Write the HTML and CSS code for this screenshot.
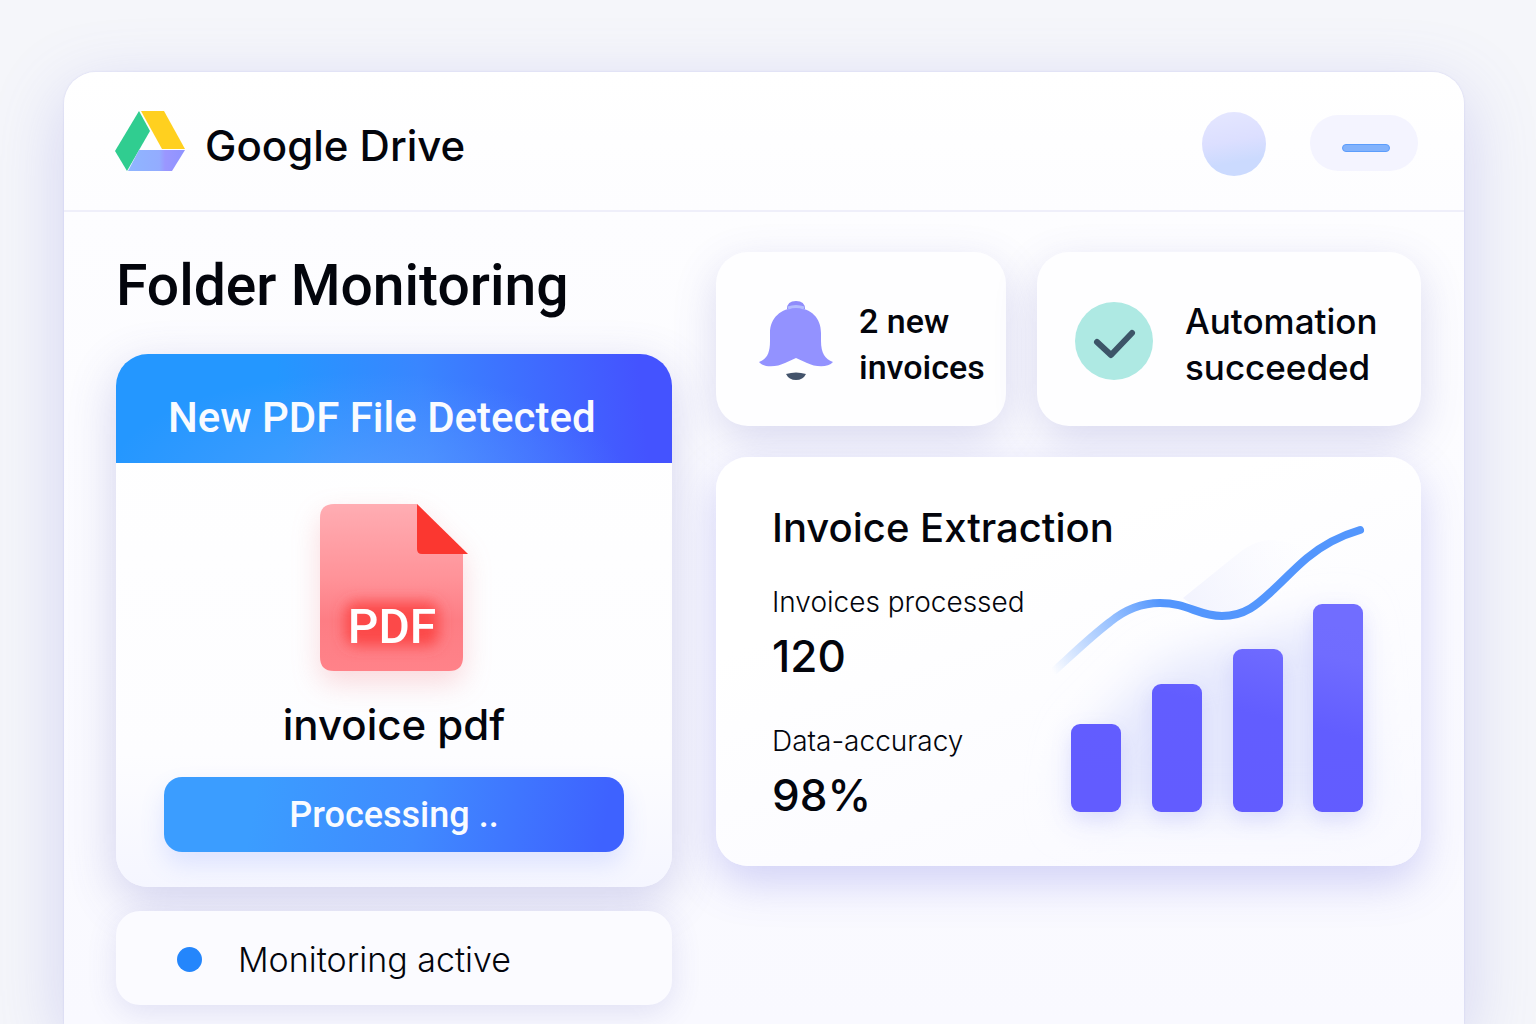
FILE: index.html
```html
<!DOCTYPE html>
<html lang="en">
<head>
  <meta charset="UTF-8">
  <meta name="viewport" content="width=device-width, initial-scale=1.0">
  <title>Folder Monitoring</title>
  <link rel="stylesheet" href="styles.css">
</head>
<body>
  <div class="window">
    <header class="topbar">
      <svg class="logo" viewBox="0 0 70 61" aria-hidden="true">
        <defs>
          <linearGradient id="driveBlue" x1="0" x2="1">
            <stop offset="0" stop-color="#8fb6ff"/>
            <stop offset="0.55" stop-color="#93acff"/>
            <stop offset="0.65" stop-color="#9a97ff"/>
            <stop offset="1" stop-color="#8f93ff"/>
          </linearGradient>
        </defs>
        <path d="M24 0 L35 20 L12 60 L0 40 Z" fill="#30cd90"/>
        <path d="M26 0 H49 L70 38 H47 Z" fill="#ffd01f"/>
        <path d="M24 39 H70 L57 60 H13 Z" fill="url(#driveBlue)"/>
      </svg>
      <span class="brand">Google Drive</span>
      <button class="avatar" type="button" aria-label="Account"></button>
      <button class="menu-pill" type="button" aria-label="Menu"><span class="menu-line"></span></button>
    </header>

    <main class="content">
      <section class="monitor">
        <h1 class="page-title">Folder Monitoring</h1>

        <article class="file-card">
          <h2 class="file-banner">New PDF File Detected</h2>
          <div class="file-body">
            <svg class="pdf-icon" viewBox="0 0 148 167" role="img" aria-label="PDF">
              <defs>
                <linearGradient id="pdfPage" x1="0" y1="0" x2="0" y2="1">
                  <stop offset="0" stop-color="#ffadb3"/>
                  <stop offset="0.45" stop-color="#ff9298"/>
                  <stop offset="0.7" stop-color="#fd7d84"/>
                  <stop offset="1" stop-color="#ff8289"/>
                </linearGradient>
                <filter id="pdfGlow" x="-30%" y="-50%" width="160%" height="200%">
                  <feGaussianBlur stdDeviation="7"/>
                </filter>
              </defs>
              <path d="M14 0 H97 L143 48 V153 Q143 167 129 167 H14 Q0 167 0 153 V14 Q0 0 14 0 Z" fill="url(#pdfPage)"/>
              <path d="M97 0 L148 50 H102 Q97 50 97 45 Z" fill="#fb3730"/>
              <rect x="25" y="98" width="94" height="44" rx="12" fill="#fc4a4a" filter="url(#pdfGlow)"/>
              <text class="pdf-text" x="72" y="139" text-anchor="middle">PDF</text>
            </svg>
            <p class="file-name">invoice pdf</p>
            <button class="process-btn" type="button">Processing ..</button>
          </div>
        </article>

        <div class="status">
          <span class="status-dot"></span>
          <span>Monitoring active</span>
        </div>
      </section>

      <section class="overview">
        <div class="notices">
          <div class="notice">
            <svg class="bell-icon" viewBox="0 0 76 80" aria-hidden="true">
              <path d="M29 8 Q29 0 38 0 Q47 0 47 8 Z" fill="#8f8cfb"/>
              <path d="M38 7 C53 7 63 17 63 32 V40 C63 52 67 58 75 61 C70 67 57 66 49 62 L38 57 L27 62 C19 66 6 67 1 61 C9 58 12 52 12 40 V32 C12 17 23 7 38 7 Z" fill="#9392ff"/>
              <path d="M30 7 Q38 4 46 7" fill="none" stroke="#b3bcff" stroke-width="3"/>
              <path d="M28 73 Q38 70 48 73 Q45 79 38 79 Q31 79 28 73 Z" fill="#43536b"/>
            </svg>
            <p>2 new<br>invoices</p>
          </div>
          <div class="notice notice-wide">
            <svg class="check-icon" viewBox="0 0 78 78" aria-hidden="true">
              <circle cx="39" cy="39" r="39" fill="#aee9e3"/>
              <path d="M22 40 L36 53 L57 31" fill="none" stroke="#3d5568" stroke-width="6" stroke-linecap="round" stroke-linejoin="round"/>
            </svg>
            <p>Automation<br>succeeded</p>
          </div>
        </div>

        <article class="stats">
          <h2 class="stats-title">Invoice Extraction</h2>
          <dl class="metrics">
            <div class="metric">
              <dt>Invoices processed</dt>
              <dd>120</dd>
            </div>
            <div class="metric">
              <dt>Data-accuracy</dt>
              <dd>98%</dd>
            </div>
          </dl>
          <svg class="chart" viewBox="0 0 320 313" aria-hidden="true">
            <defs>
              <linearGradient id="barFill" gradientUnits="userSpaceOnUse" x1="150" y1="308" x2="200" y2="100">
                <stop offset="0" stop-color="#625cff"/>
                <stop offset="0.5" stop-color="#625dff"/>
                <stop offset="0.85" stop-color="#706cff"/>
                <stop offset="1" stop-color="#716dff"/>
              </linearGradient>
              <linearGradient id="lineFill" gradientUnits="userSpaceOnUse" x1="2" y1="168" x2="110" y2="100">
                <stop offset="0" stop-color="#5a9bff" stop-opacity="0"/>
                <stop offset="0.5" stop-color="#6ea8ff" stop-opacity="0.6"/>
                <stop offset="1" stop-color="#5396fd"/>
              </linearGradient>
              <linearGradient id="peakFill" x1="0" y1="0.6" x2="1" y2="0.3">
                <stop offset="0" stop-color="#f3f4fe"/>
                <stop offset="1" stop-color="#f6f7ff" stop-opacity="0"/>
              </linearGradient>
              <filter id="haze" x="-40%" y="-40%" width="180%" height="180%">
                <feGaussianBlur stdDeviation="22"/>
              </filter>
            </defs>
            <path d="M20 310 L30 240 L110 160 L220 130 L300 110 L316 310 Z" fill="#e6e9fd" filter="url(#haze)"/>
            <path d="M132 94 L189 48 Q206 35 222 36 Q240 37 260 48 L222 86 Q200 112 171 112 Q150 110 132 94 Z" fill="url(#peakFill)"/>
            <g class="bars" fill="url(#barFill)">
              <rect x="20" y="220" width="50" height="88" rx="9"/>
              <rect x="101" y="180" width="50" height="128" rx="9"/>
              <rect x="182" y="145" width="50" height="163" rx="9"/>
              <rect x="262" y="100" width="50" height="208" rx="9"/>
            </g>
            <path d="M2 168 C22 150 38 134 59 118 C76 104 92 99 109 99 C137 99 147 112 171 112 C195 112 208 99 222 86 C234 75 244 64 256 54 C274 39 292 31 309 26" fill="none" stroke="url(#lineFill)" stroke-width="8" stroke-linecap="round"/>
          </svg>
        </article>
      </section>
    </main>
  </div>
</body>
</html>
```
FILE: styles.css
```css
* {
  box-sizing: border-box;
}
body {
  margin: 0;
  min-height: 100vh;
  padding: 72px 72px 0 64px;
  display: flex;
  overflow-x: hidden;
  font-family: Inter, "Liberation Sans", sans-serif;
  font-weight: 500;
  color: #03050c;
  background: #f5f6fa;
}
h1, h2, p, dl, dd {
  margin: 0;
  font-weight: 500;
}
button {
  border: none;
  padding: 0;
  font-family: inherit;
  cursor: pointer;
}

.window {
  flex: 1;
  border-radius: 32px 32px 0 0;
  background: linear-gradient(#ffffff, #fdfdff 140px, #f9f9ff);
  box-shadow: 0 20px 70px rgba(110, 110, 220, 0.26), 0 0 2px rgba(150, 150, 230, 0.3);
}

/* header */
.topbar {
  display: flex;
  align-items: center;
  height: 140px;
  padding: 0 46px 0 51px;
  border-bottom: 2px solid #efeffa;
}
.logo {
  width: 70px;
  height: 61px;
}
.brand {
  flex: 1;
  padding: 10px 0 0 20px;
  font-size: 42px;
  line-height: 52px;
}
.avatar {
  width: 64px;
  height: 64px;
  margin: 6px 44px 0 0;
  border-radius: 50%;
  background: linear-gradient(170deg, #e5e7ff, #dcdfff 45%, #cbdafe 75%);
}
.menu-pill {
  display: flex;
  align-items: center;
  justify-content: center;
  width: 108px;
  height: 56px;
  margin-top: 4px;
  padding: 10px 0 0 4px;
  border-radius: 28px;
  background: #f4f4ff;
}
.menu-line {
  width: 48px;
  height: 8px;
  border: 1px solid #5c9dfc;
  border-radius: 4px;
  background: #82b2fc;
}

/* two columns */
.content {
  display: grid;
  grid-template-columns: 556fr 705fr;
  gap: 44px;
  padding: 40px 43px 20px 52px;
}

.page-title {
  padding-top: 2px;
  font-family: Roboto, sans-serif;
  font-size: 57px;
  line-height: 64px;
  margin-bottom: 36px;
}
.file-card {
  border-radius: 32px;
  overflow: hidden;
  background: linear-gradient(#ffffff, #fdfdff 75%, #f5f6ff);
  box-shadow: 0 14px 48px rgba(80, 80, 180, 0.24);
}
.file-banner {
  padding: 38px 52px 19px;
  font-family: Roboto, sans-serif;
  font-size: 42px;
  line-height: 52px;
  color: #f9fbff;
  background: radial-gradient(ellipse at 45% 115%, rgba(110, 165, 255, 0.5), transparent 60%),
    linear-gradient(84deg, #2497ff 30%, #3986ff 55%, #4453ff 94%);
}
.file-body {
  display: flex;
  flex-direction: column;
  align-items: center;
  padding: 41px 48px 35px;
}
.pdf-icon {
  width: 148px;
  height: 167px;
  overflow: visible;
  filter: drop-shadow(0 12px 14px rgba(240, 100, 110, 0.24));
}
.pdf-text {
  font-family: Roboto, sans-serif;
  font-size: 48px;
  font-weight: 500;
  fill: #ffffff;
}
.file-name {
  margin: 27px 0 25px;
  font-size: 42px;
  line-height: 54px;
}
.process-btn {
  width: 100%;
  height: 75px;
  border-radius: 18px;
  font-family: Roboto, sans-serif;
  font-size: 36px;
  font-weight: 500;
  color: #f9fbff;
  background: linear-gradient(100deg, #3b9dff 20%, #408aff 55%, #3e62ff 95%);
  box-shadow: 0 12px 24px rgba(90, 120, 255, 0.16);
}
.status {
  display: flex;
  align-items: center;
  gap: 36px;
  height: 94px;
  margin-top: 24px;
  padding: 2px 61px 0;
  border-radius: 24px;
  font-size: 34px;
  font-weight: 300;
  background: #fbfbff;
  box-shadow: 0 8px 30px rgba(80, 80, 180, 0.14);
}
.status-dot {
  width: 25px;
  height: 25px;
  border-radius: 50%;
  background: #2486fc;
}

/* right side */
.overview {
  display: flex;
  flex-direction: column;
  gap: 31px;
}
.notices {
  display: grid;
  grid-template-columns: 290fr 384fr;
  gap: 31px;
}
.notice {
  display: flex;
  align-items: center;
  gap: 25px;
  height: 174px;
  padding: 4px 0 0 42px;
  border-radius: 32px;
  font-family: Roboto, sans-serif;
  font-size: 34px;
  line-height: 46px;
  white-space: nowrap;
  background: #fefeff;
  box-shadow: 0 14px 44px rgba(80, 80, 180, 0.2);
}
.notice p {
  padding-top: 6px;
}
.notice-wide {
  gap: 32px;
  padding-left: 38px;
  font-family: Inter, sans-serif;
  font-size: 35px;
}
.bell-icon {
  width: 76px;
  height: 80px;
}
.check-icon {
  width: 78px;
  height: 78px;
}

.stats {
  display: grid;
  grid-template-columns: 1fr 320px;
  grid-template-rows: auto 1fr;
  padding: 47px 50px 39px 56px;
  border-radius: 32px;
  background: linear-gradient(160deg, #ffffff 30%, #f9f9ff);
  box-shadow: 0 16px 44px rgba(90, 90, 220, 0.26);
}
.stats-title {
  grid-column: 1 / -1;
  grid-row: 1;
  font-size: 40px;
  line-height: 48px;
}
.metrics {
  grid-column: 1;
  grid-row: 2;
  white-space: nowrap;
}
.metric {
  padding-top: 32px;
}
.metric + .metric {
  padding-top: 35px;
}
.metric dt {
  font-size: 28px;
  font-weight: 300;
  line-height: 36px;
}
.metric dd {
  padding-top: 4px;
  font-size: 44px;
  line-height: 64px;
}
.chart {
  grid-column: 2;
  grid-row: 1 / -1;
  width: 320px;
  height: 313px;
  overflow: visible;
}
.bars {
  filter: drop-shadow(0 8px 10px rgba(100, 100, 240, 0.14));
}
```
